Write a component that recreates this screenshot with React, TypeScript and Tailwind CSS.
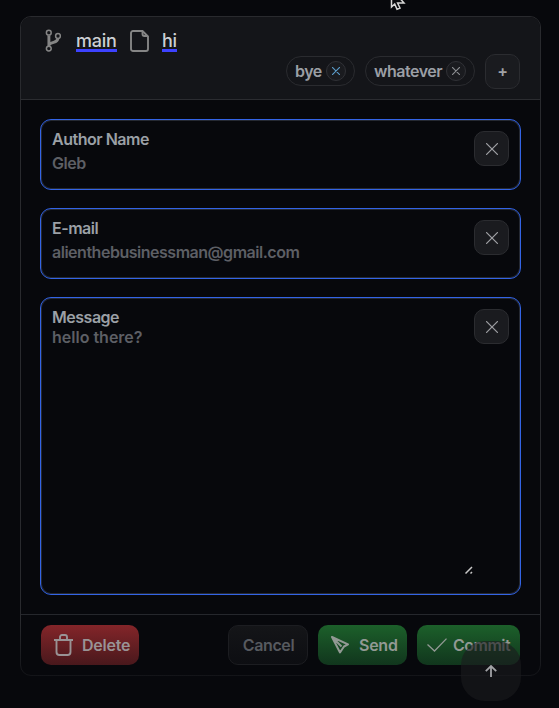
import type { ReactNode } from "react";

function Cross({ size }: { size: number }) {
  return (
    <svg width={size} height={size} viewBox="0 0 12 12" fill="none" stroke="currentColor" strokeWidth={size < 10 ? 1.7 : 1.3} strokeLinecap="round">
      <path d="M.6.6 11.4 11.4M11.4.6.6 11.4" />
    </svg>
  );
}

function Tag({ label, active }: { label: string; active?: boolean }) {
  return (
    <div className={`mt-0.5 flex h-[30px] items-center justify-between rounded-full border border-[#2a2b2f] px-2 ${active ? "w-[69px]" : "w-[110px]"}`}>
      <span className="text-[#9b9fa5]">{label}</span>
      <button className={`flex size-5 items-center justify-center rounded-full border border-[#303136] bg-[#1a1b1f] ${active ? "text-[#5a9bc8]" : "text-[#8b8d91]"}`}>
        <Cross size={8} />
      </button>
    </div>
  );
}

function Field({ label, children, tall }: { label: string; children: ReactNode; tall?: boolean }) {
  return (
    <div className={`flex justify-between rounded-[11px] border border-[#3364e6] px-[11px] shadow-[inset_0_0_0_1px_#252932] ${tall ? "h-[298px]" : "h-[71px]"}`}>
      <div className="flex min-w-0 flex-1 flex-col pt-2.5">
        <label className="h-[18px] leading-[18px] text-[#9ba0a6]">{label}</label>
        {children}
      </div>
      <button className="mt-[11px] flex size-[35px] shrink-0 items-center justify-center rounded-[10px] border border-[#2b2c30] bg-[#1a1b1f] text-[#9b9ca0]">
        <Cross size={12} />
      </button>
    </div>
  );
}

export default function App() {
  return (
    <div className="relative h-[708px] w-[559px] overflow-hidden bg-[#07080c] px-5 pt-4 font-['Inter',sans-serif] text-[16px] leading-5 font-semibold tracking-[-0.48px]">
      <div className="flex h-[660px] w-[521px] flex-col overflow-hidden rounded-[11px] border border-[#292a2e]">
        <header className="h-[83px] shrink-0 border-b border-[#2b2c30] bg-[#141519] pt-3 pr-5 pl-6">
          <div className="flex h-6 items-center text-[18px] font-medium text-[#cdd0d4]">
            <svg width="16" height="24" viewBox="0 0 16 24" fill="none" stroke="#858585" strokeWidth="1.5">
              <circle cx="3.8" cy="3.7" r="2.4" />
              <circle cx="13" cy="7" r="2.4" />
              <circle cx="3.8" cy="19.6" r="2.4" />
              <path d="M3.9 6.5V17M4.2 15.5c3-3.2 8.4-1.2 8.7-6.1" strokeWidth="2.9" />
            </svg>
            <span className="ml-[15px] h-[22px] w-[41px] border-b-[3px] border-[#3d42ff] leading-[22px] tracking-[-0.25px]">main</span>
            <svg className="ml-[13px]" width="19" height="22" viewBox="0 0 19 22" fill="none" stroke="#858585" strokeWidth="1.9">
              <path d="M3 1h9.5L18 6.5V19a2 2 0 0 1-2 2H3a2 2 0 0 1-2-2V3a2 2 0 0 1 2-2Z" />
              <path d="M12.5 1v3a2 2 0 0 0 2 2H18" />
            </svg>
            <span className="ml-[13px] h-[22px] w-[15px] border-b-[3px] border-[#3d42ff] leading-[22px] tracking-[-0.35px]">hi</span>
          </div>
          <div className="mt-px flex items-start justify-end gap-2.5">
            <Tag label="bye" active />
            <Tag label="whatever" />
            <button className="flex size-[35px] items-center justify-center rounded-[10px] border border-[#2b2c30] bg-[#1a1b1f] pb-px text-[16px] text-[#a0a2a6]">+</button>
          </div>
        </header>
        <main className="flex flex-1 flex-col gap-[18px] px-[19px] pt-[19px]">
          <Field label="Author Name">
            <div className="mt-[5px] h-5 text-[#5d5f65]">Gleb</div>
          </Field>
          <Field label="E-mail">
            <div className="mt-[5px] h-5 text-[#5d5f65]">alienthebusinessman@gmail.com</div>
          </Field>
          <Field label="Message" tall>
            <div className="mt-px flex flex-1 flex-col justify-between pb-[19px] text-[#5d5f65]">
              <div className="tracking-normal">hello there?</div>
              <svg className="self-end" width="10" height="9" viewBox="0 0 10 9" fill="none" stroke="#c8c8c8" strokeWidth="1.5">
                <path d="M1.5 7.5 8 1M6.5 7.5 8 6" />
              </svg>
            </div>
          </Field>
        </main>
        <footer className="flex h-[61px] shrink-0 items-start gap-2.5 border-t border-[#25272c] px-5 pt-2.5 tracking-[-0.25px]">
          <button className="z-10 mr-auto flex h-10 w-[98px] items-center rounded-[10px] bg-linear-to-b from-[#842529] to-[#49181c] pl-[13px] text-[#999395]">
            <svg width="19" height="22" viewBox="0 0 19 22" fill="none" stroke="currentColor" strokeWidth="1.9">
              <path d="M0 6h19M6 5V3a2 2 0 0 1 2-2h3a2 2 0 0 1 2 2v2M2.5 6v12a3 3 0 0 0 3 3h8a3 3 0 0 0 3-3V6" />
            </svg>
            <span className="ml-[9px]">Delete</span>
          </button>
          <button className="z-10 h-10 w-20 rounded-[10px] border border-[#1c1d21] bg-linear-to-b from-[#141518] to-[#0d0e12] pl-px tracking-[-0.4px] text-[#575a5f]">Cancel</button>
          <button className="z-10 flex h-10 w-[89px] items-center rounded-[10px] bg-linear-to-b from-[#1c602a] to-[#11361d] pl-[13px] text-[#929994]">
            <svg width="18" height="18" viewBox="0 0 18 18" fill="none" stroke="currentColor" strokeWidth="2" strokeLinejoin="round">
              <path d="M1 1 17 8.4 13 10.5 9 16.5 1 1ZM1 1l9.5 9.5" />
            </svg>
            <span className="ml-[10px]">Send</span>
          </button>
          <button className="z-10 flex h-10 w-[103px] items-center rounded-[10px] bg-linear-to-b from-[#1c602a] to-[#11361d] pl-2.5 tracking-[-0.5px] text-[#929994]">
            <svg width="20" height="14" viewBox="0 0 20 14" fill="none" stroke="currentColor" strokeWidth="1.3">
              <path d="m.5 6.5 7 6.5L19.5.6" />
            </svg>
            <span className="ml-1.5">Commit</span>
          </button>
        </footer>
      </div>
      <div className="pointer-events-none absolute inset-x-0 bottom-0 h-[88px] bg-linear-to-b from-transparent to-[#07080c]" />
      <button className="absolute top-[641px] left-[461px] z-20 flex size-[60px] items-center justify-center rounded-[24px] bg-[#1a1b1e]/60 text-[#a2a3a6]">
        <svg width="12" height="12" viewBox="0 0 12 12" fill="none" stroke="currentColor" strokeWidth="1.8">
          <path d="M6 12V1M.8 6.2 6 1l5.2 5.2" />
        </svg>
      </button>
      <svg className="absolute top-0 left-[389px]" width="18" height="11" viewBox="0 0 18 11" fill="#08090d" stroke="#d7d7d7" strokeWidth="1.5">
        <path d="M2.5-6v13l3.2-3L8 9.3l3-1.3-2.4-5H15L2.5-11Z" />
      </svg>
    </div>
  );
}
